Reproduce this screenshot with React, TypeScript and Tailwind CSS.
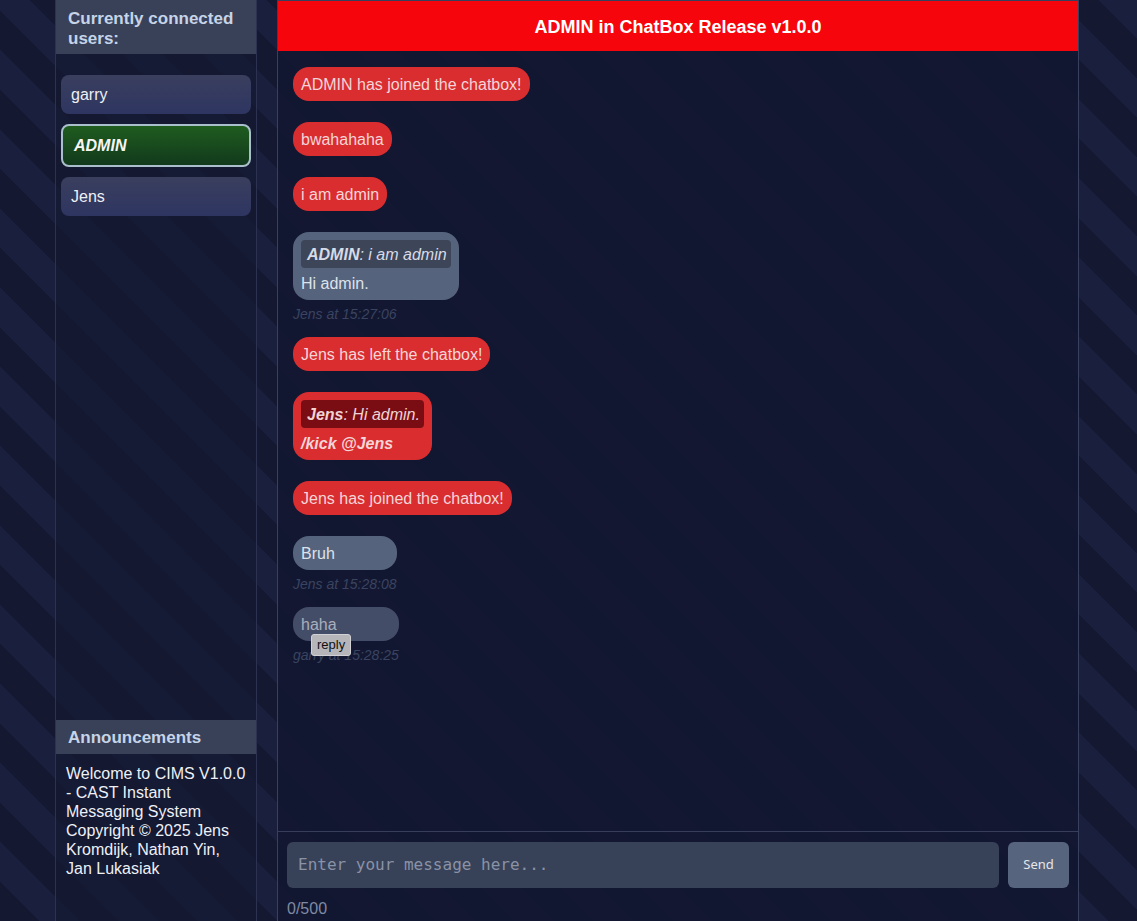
import React from "react";

function Bubble({
  children,
  variant,
  className = "",
}: {
  children: React.ReactNode;
  variant: "red" | "gray" | "faded";
  className?: string;
}) {
  const colors =
    variant === "red"
      ? "bg-[#d92d30] text-[#f4d5d7]"
      : variant === "gray"
      ? "bg-[#56637d] text-[#dde2ea]"
      : "bg-[#444d67] text-[#a9afbd]";
  return (
    <div className={`rounded-2xl px-2 pt-[9px] pb-[7px] text-[16px] leading-[18px] mb-[6px] ${colors} ${className}`}>
      {children}
    </div>
  );
}

function Stamp({ children }: { children: React.ReactNode }) {
  return <div className="h-4 text-[14px] leading-4 italic text-[#3a4460]">{children}</div>;
}

export default function App() {
  return (
    <div className="h-[921px] w-full overflow-hidden flex gap-[20px] pl-[55px] bg-[repeating-linear-gradient(45deg,#141931_0px,#141931_28px,#1a1f3d_28px,#1a1f3d_56px)] font-['Liberation_Sans',Arial,sans-serif]">
      {/* Sidebar */}
      <aside className="w-[202px] h-full flex flex-col border-x border-[#2c3250] bg-[rgba(20,24,50,0.7)]">
        <div className="bg-[#394159] px-3 pt-[9px] pb-[5px] text-[17px] leading-[20px] font-bold text-[#c6d4e8]">
          Currently connected users:
        </div>
        <div className="flex flex-col px-[5px] pt-[21px]">
          <div className="h-[39px] flex items-center px-[10px] rounded-lg bg-gradient-to-b from-[#3a3f5e] to-[#2e3561] text-[16px] text-[#eef0f6]">
            garry
          </div>
          <div className="mt-[10px] h-[43px] flex items-center px-[11px] rounded-lg border-2 border-[#a9bfcc] bg-gradient-to-b from-[#1f5c1f] to-[#123a1b] text-[16px] font-bold italic text-[#f4f6f8]">
            ADMIN
          </div>
          <div className="mt-[10px] h-[39px] flex items-center px-[10px] rounded-lg bg-gradient-to-b from-[#3a3f5e] to-[#2e3561] text-[16px] text-[#eef0f6]">
            Jens
          </div>
        </div>
        <div className="mt-auto">
          <div className="h-[34px] flex items-center pt-[1px] bg-[#394159] px-3 text-[17px] font-bold text-[#c6d4e8]">
            Announcements
          </div>
          <div className="h-[167px] pl-[10px] pr-[9px] pt-[10px] text-[16px] leading-[19px] text-[#eef0f6]">
            Welcome to CIMS V1.0.0 - CAST Instant Messaging System Copyright © 2025 Jens Kromdijk, Nathan Yin, Jan Lukasiak
          </div>
        </div>
      </aside>

      {/* Chat */}
      <main className="w-[802px] h-full flex flex-col border border-b-0 border-[#384060] bg-[rgba(18,23,49,0.92)]">
        <div className="h-[50px] shrink-0 flex items-center justify-center pt-[2px] bg-[#f6060c] text-[18px] font-bold text-white">
          ADMIN in ChatBox Release v1.0.0
        </div>

        <div className="flex-1 overflow-hidden flex flex-col items-start px-[15px] pt-[16px]">
          <div className="inline-flex flex-col mb-[15px]">
            <Bubble variant="red">ADMIN has joined the chatbox!</Bubble>
          </div>
          <div className="inline-flex flex-col mb-[15px]">
            <Bubble variant="red">bwahahaha</Bubble>
          </div>
          <div className="inline-flex flex-col mb-[15px]">
            <Bubble variant="red">i am admin</Bubble>
          </div>
          <div className="inline-flex flex-col mb-[15px]">
            <Bubble variant="gray" className="!pt-2 !pb-2">
              <div className="rounded bg-[#3d4559] pl-[6px] pr-[4px] pt-[6px] pb-[4px] italic text-[#d7dbe5]">
                <span className="font-bold">ADMIN</span>: i am admin
              </div>
              <div className="mt-[7px] -mb-[1px]">Hi admin.</div>
            </Bubble>
            <Stamp>Jens at 15:27:06</Stamp>
          </div>
          <div className="inline-flex flex-col mb-[15px]">
            <Bubble variant="red">Jens has left the chatbox!</Bubble>
          </div>
          <div className="inline-flex flex-col mb-[15px]">
            <Bubble variant="red" className="!pt-2 !pb-2">
              <div className="rounded bg-[#7a0d14] pl-[6px] pr-[4px] pt-[6px] pb-[4px] italic text-[#f0d3d5]">
                <span className="font-bold">Jens</span>: Hi admin.
              </div>
              <div className="mt-[7px] -mb-[1px] font-bold italic">/kick @Jens</div>
            </Bubble>
          </div>
          <div className="inline-flex flex-col mb-[15px]">
            <Bubble variant="red">Jens has joined the chatbox!</Bubble>
          </div>
          <div className="inline-flex flex-col mb-[15px]">
            <Bubble variant="gray">Bruh</Bubble>
            <Stamp>Jens at 15:28:08</Stamp>
          </div>
          <div className="relative inline-flex flex-col mb-[15px]">
            <Bubble variant="faded">haha</Bubble>
            <Stamp>garry at 15:28:25</Stamp>
            <div className="absolute left-[18px] top-[27px] h-[22px] flex items-center rounded-[3px] border border-[#d2d2d6] bg-[#b5b5ba] px-[5px] text-[13px] text-[#111]">
              reply
            </div>
          </div>
        </div>

        <div className="shrink-0 border-t border-[#363e5c] pl-[9px] pr-[9px] pt-[10px] h-[90px]">
          <div className="flex gap-[9px] h-[46px]">
            <input
              className="flex-1 min-w-0 rounded-md bg-[#374158] px-[11px] text-[16px] text-[#e5e7eb] outline-none font-['DejaVu_Sans_Mono',monospace] placeholder:text-[#8a92a6]"
              placeholder="Enter your message here..."
            />
            <button className="w-[61px] rounded-md bg-[#56647e] text-[13px] text-[#e5e7eb] font-['Noto_Sans',sans-serif]">
              Send
            </button>
          </div>
          <div className="mt-[12px] text-[16px] leading-[18px] text-[#7f8aa3]">0/500</div>
        </div>
      </main>
    </div>
  );
}
